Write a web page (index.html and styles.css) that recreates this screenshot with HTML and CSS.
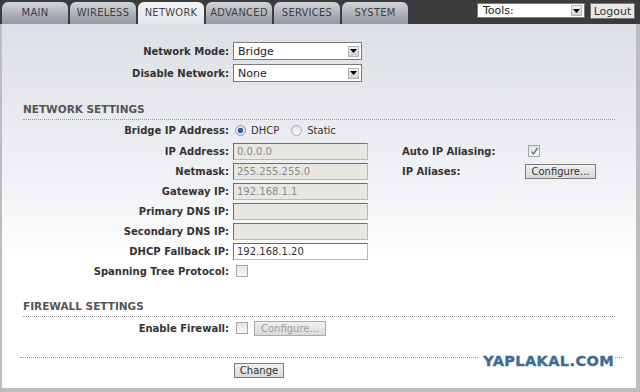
FILE: index.html
```html
<!DOCTYPE html>
<html lang="en">
<head>
<meta charset="UTF-8">
<title>Network</title>
<link rel="stylesheet" href="styles.css">
</head>
<body>

<!-- Top bar with tabs -->
<div class="topbar">
  <ul class="tabs">
    <li class="tab">MAIN</li>
    <li class="tab">WIRELESS</li>
    <li class="tab active">NETWORK</li>
    <li class="tab">ADVANCED</li>
    <li class="tab">SERVICES</li>
    <li class="tab">SYSTEM</li>
  </ul>
  <div class="tools">
    <div class="select tools-select">
      <span>Tools:</span>
      <span class="arrow"><svg width="7" height="4" viewBox="0 0 7 4"><path d="M0 0h7L3.5 4z" fill="#000"/></svg></span>
    </div>
    <button class="logout">Logout</button>
  </div>
</div>

<div class="panel">

  <div class="top-rows">
    <div class="row tall">
      <span class="lbl">Network Mode:</span>
      <div class="select mode-select">
        <span>Bridge</span>
        <span class="arrow"><svg width="7" height="4" viewBox="0 0 7 4"><path d="M0 0h7L3.5 4z" fill="#000"/></svg></span>
      </div>
    </div>
    <div class="row tall">
      <span class="lbl">Disable Network:</span>
      <div class="select mode-select">
        <span>None</span>
        <span class="arrow"><svg width="7" height="4" viewBox="0 0 7 4"><path d="M0 0h7L3.5 4z" fill="#000"/></svg></span>
      </div>
    </div>
  </div>

  <!-- Network settings -->
  <h3 class="section-title">NETWORK SETTINGS</h3>
  <div class="row bridge">
    <span class="lbl">Bridge IP Address:</span>
    <div class="radios">
      <span class="radio checked"></span><span class="radio-text">DHCP</span>
      <span class="radio"></span><span class="radio-text">Static</span>
    </div>
  </div>
  <div class="cols">
    <div class="col-left">
      <div class="row">
        <span class="lbl">IP Address:</span>
        <input class="field" type="text" value="0.0.0.0" disabled>
      </div>
      <div class="row">
        <span class="lbl">Netmask:</span>
        <input class="field" type="text" value="255.255.255.0" disabled>
      </div>
      <div class="row">
        <span class="lbl">Gateway IP:</span>
        <input class="field" type="text" value="192.168.1.1" disabled>
      </div>
      <div class="row">
        <span class="lbl">Primary DNS IP:</span>
        <input class="field" type="text" value="" disabled>
      </div>
      <div class="row">
        <span class="lbl">Secondary DNS IP:</span>
        <input class="field" type="text" value="" disabled>
      </div>
      <div class="row">
        <span class="lbl">DHCP Fallback IP:</span>
        <input class="field" type="text" value="192.168.1.20">
      </div>
      <div class="row">
        <span class="lbl">Spanning Tree Protocol:</span>
        <span class="check"></span>
      </div>
    </div>
    <div class="col-right">
      <div class="row">
        <span class="lbl2">Auto IP Aliasing:</span>
        <span class="check checked"><svg width="9" height="9" viewBox="0 0 9 9"><path d="M1.5 4.5l2 2.5 4-6" fill="none" stroke="#5d78a8" stroke-width="1.4"/></svg></span>
      </div>
      <div class="row">
        <span class="lbl2">IP Aliases:</span>
        <button class="btn">Configure...</button>
      </div>
    </div>
  </div>

  <!-- Firewall settings -->
  <h3 class="section-title firewall">FIREWALL SETTINGS</h3>
  <div class="row">
    <span class="lbl">Enable Firewall:</span>
    <span class="check"></span>
    <button class="btn" disabled>Configure...</button>
  </div>

  <div class="footer">
    <button class="btn change">Change</button>
  </div>

  <div class="watermark">YAPLAKAL.COM</div>
</div>

</body>
</html>
```

FILE: styles.css
```css
  /* Page */
  body {
    margin: 0;
    width: 640px;
    height: 392px;
    overflow: hidden;
    background-color: #bdbdbd;
    font-family: 'DejaVu Sans', Verdana, sans-serif;
    font-size: 10px;
    color: #333;
  }

  /* Top bar */
  .topbar {
    display: flex;
    height: 24px;
    background-color: #3b3b3b;
    padding-left: 2px;
  }

  .tabs {
    display: flex;
    align-items: flex-end;
    gap: 2px;
    margin: 0;
    padding: 0;
    list-style: none;
  }

  .tab {
    width: 66px;
    height: 22px;
    line-height: 22px;
    text-align: center;
    font-family: 'DejaVu Sans Condensed', 'DejaVu Sans', sans-serif;
    font-stretch: condensed;
    font-size: 11px;
    letter-spacing: 0.3px;
    color: #3a3d42;
    background: linear-gradient(#d2d5d9, #a3a7ad 70%, #969aa1);
    border-radius: 6px 6px 0 0;
  }

  .tab.active {
    color: #444;
    background: linear-gradient(#f4f5f6, #e3e5e9);
  }

  .tools {
    display: flex;
    gap: 5px;
    margin-left: auto;
    padding: 3px 5px 0 0;
  }

  .select {
    display: flex;
    align-items: center;
    justify-content: space-between;
    box-sizing: border-box;
    background-color: #fff;
    border: 1px solid #7a7a7a;
    padding-left: 4px;
    font-size: 11px;
    color: #222;
  }

  .select .arrow {
    display: flex;
    align-items: center;
    justify-content: center;
    width: 11px;
    height: 11px;
    margin-right: 2px;
    background: linear-gradient(#f2f2f2, #d0d0d0);
    border: 1px solid #b5b5b5;
    box-sizing: border-box;
  }

  .tools-select {
    width: 108px;
    height: 15px;
    font-size: 11px;
    padding-left: 5px;
  }

  .logout {
    width: 45px;
    height: 16px;
    padding: 0;
    border: 1px solid #777;
    background-color: #e8e8e8;
    font-family: 'DejaVu Sans', sans-serif;
    font-size: 11px;
    color: #333;
  }

  /* Main panel */
  .panel {
    position: relative;
    box-sizing: border-box;
    width: 634px;
    height: 364px;
    margin-left: 2px;
    padding-top: 16px;
    background: linear-gradient(#dcdfe5, #f2f3f6 45%, #fff 65%);
  }

  .row {
    display: flex;
    align-items: center;
    height: 20px;
  }

  .row.tall {
    height: 22px;
  }

  .row.bridge {
    height: 19px;
    margin-bottom: 1px;
  }

  .lbl {
    width: 227px;
    padding-right: 4px;
    flex-shrink: 0;
    text-align: right;
    font-weight: bold;
    color: #333;
  }

  .lbl2 {
    width: 124px;
    flex-shrink: 0;
    font-weight: bold;
    color: #333;
  }

  .mode-select {
    width: 129px;
    height: 18px;
  }

  /* Section headings */
  .section-title {
    margin: 18px 21px 1px 21px;
    padding-bottom: 3px;
    height: 14px;
    line-height: 14px;
    font-size: 10.5px;
    font-weight: bold;
    color: #555;
    border-bottom: 1px dotted #999;
  }

  /* Radios */
  .radios {
    display: flex;
    align-items: center;
  }

  .radio {
    box-sizing: border-box;
    width: 11px;
    height: 11px;
    margin: 0 5px 0 2px;
    border-radius: 50%;
    border: 1px solid #a9a9a9;
    background: linear-gradient(#e6e6e6, #fbfbfb);
  }

  .radio.checked {
    border-color: #8a9bb5;
    background: radial-gradient(circle, #2d5d9a 0 2.5px, #dfe6ef 3px);
  }

  .radio-text {
    margin-right: 10px;
    font-size: 10px;
    color: #333;
  }

  /* Columns */
  .cols {
    display: flex;
  }

  .col-left {
    width: 366px;
  }

  .col-right {
    margin-left: 34px;
  }

  /* Inputs */
  .field {
    box-sizing: border-box;
    width: 135px;
    height: 17px;
    margin: 0;
    padding: 0 3px;
    border: 1px solid #6e6e6e;
    border-right-color: #b8b8b8;
    border-bottom-color: #b8b8b8;
    background-color: #fff;
    font-family: 'DejaVu Sans', sans-serif;
    font-size: 10px;
    color: #333;
  }

  .field:disabled {
    background-color: #e9e7e1;
    color: #8a8a8a;
  }

  /* Checkboxes */
  .check {
    display: flex;
    align-items: center;
    justify-content: center;
    box-sizing: border-box;
    width: 12px;
    height: 12px;
    margin-left: 3px;
    border: 1px solid #a5a5a5;
    background: linear-gradient(#e4e4e4, #fafafa);
  }

  .col-right .check {
    margin-left: 2px;
  }

  /* Buttons */
  .btn {
    box-sizing: border-box;
    height: 15px;
    padding: 0 5px;
    border: 1px solid #7c7c7c;
    background: linear-gradient(#f0f0f0, #d9d9d9);
    font-family: 'DejaVu Sans', sans-serif;
    font-size: 10px;
    line-height: 13px;
    color: #333;
  }

  .col-right .btn {
    width: 71px;
    margin-left: -1px;
  }

  .btn:disabled {
    width: 72px;
    margin-left: 6px;
    color: #9a9a9a;
    border-color: #a8a8a8;
  }

  /* Footer */
  .footer {
    margin: 19px 14px 0 18px;
    padding: 5px 0 0 214px;
    border-top: 1px dotted #999;
  }

  .btn.change {
    width: 50px;
    height: 15px;
    padding: 0;
  }

  /* Watermark on top of the panel */
  .watermark {
    position: absolute;
    right: 22px;
    bottom: 19px;
    font-family: 'DejaVu Sans', sans-serif;
    font-size: 14.5px;
    font-weight: 900;
    letter-spacing: 0.4px;
    color: #3f6c95;
    -webkit-text-stroke: 0.4px #3f6c95;
    background-color: #fff;
    padding-left: 4px;
  }
```
